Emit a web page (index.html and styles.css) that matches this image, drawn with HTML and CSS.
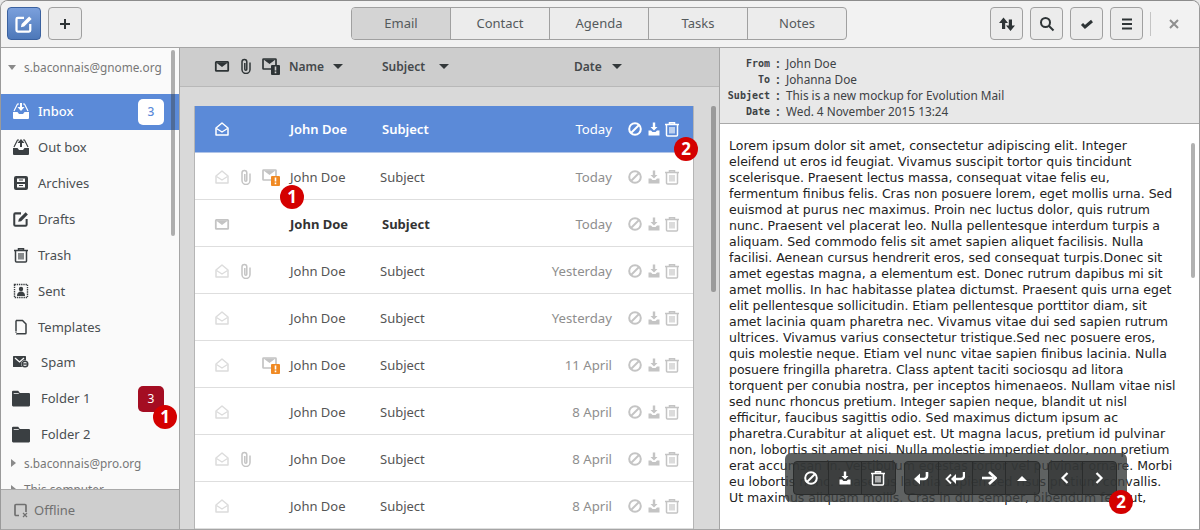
FILE: index.html
```html
<!DOCTYPE html>
<html lang="en">
<head>
  <meta charset="UTF-8" />
  <title>Evolution Mail</title>
  <link rel="stylesheet" href="styles.css">
</head>
<body>

  <!-- icons -->
  <svg class="defs" width="0" height="0">
    <symbol id="i-edit" viewBox="0 0 16 16"><path d="M8 3H3a1 1 0 0 0-1 1v9a1 1 0 0 0 1 1h9a1 1 0 0 0 1-1V8" fill="none" stroke="currentColor" stroke-width="1.8"/><path d="M5.5 10.500l.6-2.600 6-6 2 2-6 6z" fill="currentColor"/></symbol>
    <symbol id="i-plus" viewBox="0 0 16 16"><path d="M8 3v10M3 8h10" stroke="currentColor" stroke-width="2"/></symbol>
    <symbol id="i-mail" viewBox="0 0 16 16"><rect x="1.8" y="3.8" width="12.4" height="9" rx=".6" fill="none" stroke="currentColor" stroke-width="1.8"/><path d="M2 4.500h12L8 9z" fill="currentColor"/></symbol>
    <symbol id="i-open" viewBox="0 0 16 16"><path d="M2 7L8 2l6 5v7H2z" fill="none" stroke="currentColor" stroke-width="1.5" stroke-linejoin="round"/><path d="M2.500 7.500L8 11l5.500-3.500" fill="none" stroke="currentColor" stroke-width="1.3"/></symbol>
    <symbol id="i-clip" viewBox="0 0 16 16"><path d="M12 4.500v7a4 4 0 0 1-8 0V3.800a2.400 2.400 0 0 1 4.800 0v7.400a1 1 0 0 1-2 0V5" fill="none" stroke="currentColor" stroke-width="1.5"/></symbol>
    <symbol id="i-warn" viewBox="0 0 18 18"><rect x="1" y="2" width="13" height="10" rx=".6" fill="none" stroke="currentColor" stroke-width="1.7"/><path d="M1.500 2.500h12L7.500 7z" fill="currentColor"/><rect x="9" y="8" width="9" height="10" rx="1" fill="#f08a24"/><path d="M12.700 9.500h1.600v4h-1.600zM12.700 14.500h1.600v1.800h-1.600z" fill="#fff"/></symbol>
    <symbol id="i-warn-dark" viewBox="0 0 18 18"><rect x="1" y="2" width="13" height="10" rx=".6" fill="none" stroke="currentColor" stroke-width="1.7"/><path d="M1.500 2.500h12L7.500 7z" fill="currentColor"/><rect x="9" y="8" width="9" height="10" rx="1" fill="currentColor"/><path d="M12.700 9.500h1.600v4h-1.600zM12.700 14.500h1.600v1.800h-1.600z" fill="#ccc"/></symbol>
    <symbol id="i-block" viewBox="0 0 16 16"><circle cx="8" cy="8" r="5.8" fill="none" stroke="currentColor" stroke-width="2"/><path d="M4 12l8-8" stroke="currentColor" stroke-width="2"/></symbol>
    <symbol id="i-junk" viewBox="0 0 16 16"><path d="M6.800 1.500h2.400v4.500H11.500L8 9.500 4.500 6h2.300z" fill="currentColor"/><path d="M2.500 9.500H5L6.500 11h3L11 9.500h2.500v5h-11z" fill="currentColor"/></symbol>
    <symbol id="i-trash" viewBox="0 0 16 16"><path d="M1 3.500h14M5.500 3V1.700h5V3" fill="none" stroke="currentColor" stroke-width="1.500"/><path d="M2.500 4v10a1 1 0 0 0 1 1h9a1 1 0 0 0 1-1V4" fill="none" stroke="currentColor" stroke-width="1.500"/><path d="M6 6v6.500M8 6v6.500M10 6v6.500" stroke="currentColor" stroke-width="1.200"/></symbol>
    <symbol id="i-inbox" viewBox="0 0 18 18"><path d="M2 9L5.500 2H7M11 2h1.500L16 9" fill="none" stroke="currentColor" stroke-width="1.200"/><path d="M8 1h2v4h2.500L9 9 5.500 5H8z" fill="currentColor"/><path d="M1 10h4.500l1.500 2h4l1.500-2H17v6a1 1 0 0 1-1 1H2a1 1 0 0 1-1-1z" fill="currentColor"/></symbol>
    <symbol id="i-outbox" viewBox="0 0 18 18"><path d="M2 9L5.500 2H7M11 2h1.500L16 9" fill="none" stroke="currentColor" stroke-width="1.200"/><path d="M9 1l3.500 4H10v4H8V5H5.500z" fill="currentColor"/><path d="M1 10h4.500l1.500 2h4l1.500-2H17v6a1 1 0 0 1-1 1H2a1 1 0 0 1-1-1z" fill="currentColor"/></symbol>
    <symbol id="i-archive" viewBox="0 0 16 16"><rect x="1" y="1" width="14" height="14" rx="2" fill="currentColor"/><path d="M4 3.500h8v3.500H4zM4 9h8v3.500H4z" fill="#fafafa"/><path d="M6 5h4M6 10.500h4" stroke="currentColor" stroke-width="1"/></symbol>
    <symbol id="i-sent" viewBox="0 0 16 16"><rect x="1.500" y="1.500" width="13" height="13" fill="none" stroke="currentColor" stroke-width="1.400" stroke-dasharray="1.400 .8"/><circle cx="8" cy="6" r="2.200" fill="currentColor"/><path d="M4 13c0-3 1.500-4.500 4-4.500S12 10 12 13z" fill="currentColor"/></symbol>
    <symbol id="i-doc" viewBox="0 0 16 16"><path d="M3 1.500h6.500L13 5v9a.8.8 0 0 1-.8.8H3.800" fill="none" stroke="currentColor" stroke-width="1.500"/><path d="M3 1.500v11" stroke="currentColor" stroke-width="1.500"/><path d="M3 13v2h1" stroke="currentColor" stroke-width="1" stroke-dasharray="1 1" fill="none"/></symbol>
    <symbol id="i-spam" viewBox="0 0 18 14"><rect x="1" y="1" width="13" height="11" rx=".6" fill="currentColor"/><path d="M3 3l4.500 4L12 3" fill="none" stroke="#fafafa" stroke-width="1.300"/><circle cx="13" cy="9" r="3.800" fill="#fafafa"/><circle cx="13" cy="9" r="2.800" fill="none" stroke="currentColor" stroke-width="1.400"/><path d="M10.500 9h5" stroke="currentColor" stroke-width="1.400"/></symbol>
    <symbol id="i-folder" viewBox="0 0 16 15"><path d="M0 2a1 1 0 0 1 1-1h4.500l1.500 2h8a1 1 0 0 1 1 1v10a1 1 0 0 1-1 1H1a1 1 0 0 1-1-1z" fill="currentColor"/><path d="M1.500 3.500h4.500" stroke="#fafafa" stroke-width=".7"/></symbol>
    <symbol id="i-offline" viewBox="0 0 16 16"><path d="M6 13.500H3a1 1 0 0 1-1-1v-9a1 1 0 0 1 1-1h9a1 1 0 0 1 1 1V10" fill="none" stroke="currentColor" stroke-width="1.700"/><path d="M10 11l4 4M14 11l-4 4" stroke="currentColor" stroke-width="1.200"/></symbol>
    <symbol id="i-sort" viewBox="0 0 16 16"><path d="M4.500 1.500L9 7H6.200v6H3V7H0zM11.500 15L16 9.500h-3v-6H9.800v6H7z" fill="currentColor"/></symbol>
    <symbol id="i-search" viewBox="0 0 16 16"><circle cx="6.500" cy="6.500" r="4.500" fill="none" stroke="currentColor" stroke-width="2"/><path d="M10 10l4.500 4.500" stroke="currentColor" stroke-width="2"/></symbol>
    <symbol id="i-check" viewBox="0 0 16 16"><path d="M3 8l3 3 7-6" fill="none" stroke="currentColor" stroke-width="3"/></symbol>
    <symbol id="i-menu" viewBox="0 0 16 16"><path d="M3 3.500h10M3 8h10M3 12.500h10" stroke="currentColor" stroke-width="2"/></symbol>
    <symbol id="i-close" viewBox="0 0 16 16"><path d="M4 4l8 8M12 4l-8 8" stroke="currentColor" stroke-width="2"/></symbol>
    <symbol id="i-reply" viewBox="0 0 16 16"><path d="M14 2v4a3 3 0 0 1-3 3H6" fill="none" stroke="currentColor" stroke-width="2.600"/><path d="M7 3.500v11L1 9z" fill="currentColor"/></symbol>
    <symbol id="i-replyall" viewBox="0 0 20 16"><path d="M19 2v4a3 3 0 0 1-3 3h-5" fill="none" stroke="currentColor" stroke-width="2.400"/><path d="M11 4v10L6 9z" fill="currentColor"/><path d="M6 4.500L1.500 9 6 13.500" fill="none" stroke="currentColor" stroke-width="1.800"/></symbol>
    <symbol id="i-forward" viewBox="0 0 16 16"><path d="M1 8h11" stroke="currentColor" stroke-width="2.600"/><path d="M8 2l6.500 6L8 14" fill="none" stroke="currentColor" stroke-width="2.600"/></symbol>
    <symbol id="i-up" viewBox="0 0 16 16"><path d="M3 11l5-5 5 5z" fill="currentColor"/></symbol>
    <symbol id="i-prev" viewBox="0 0 16 16"><path d="M10.500 3l-5 5 5 5" fill="none" stroke="currentColor" stroke-width="2.200"/></symbol>
    <symbol id="i-next" viewBox="0 0 16 16"><path d="M5.500 3l5 5-5 5" fill="none" stroke="currentColor" stroke-width="2.200"/></symbol>
  </svg>

  <div class="window">

    <header class="toolbar">
      <div class="tool-left">
        <button class="btn btn-blue"><svg class="ic20"><use href="#i-edit"/></svg></button>
        <button class="btn"><svg class="ic16"><use href="#i-plus"/></svg></button>
      </div>
      <nav class="tabs">
        <div class="tab active">Email</div>
        <div class="tab">Contact</div>
        <div class="tab">Agenda</div>
        <div class="tab">Tasks</div>
        <div class="tab">Notes</div>
      </nav>
      <div class="tool-right">
        <button class="btn"><svg class="ic16"><use href="#i-sort"/></svg></button>
        <button class="btn"><svg class="ic16"><use href="#i-search"/></svg></button>
        <button class="btn"><svg class="ic16"><use href="#i-check"/></svg></button>
        <button class="btn"><svg class="ic16"><use href="#i-menu"/></svg></button>
        <span class="tool-sep"></span>
        <svg class="ic16 close"><use href="#i-close"/></svg>
      </div>
    </header>

    <div class="main">

      <aside class="sidebar">
        <div class="side-scroll">
          <div class="account"><span class="arrow-down"></span>s.baconnais@gnome.org</div>
          <div class="item selected"><svg class="ic18"><use href="#i-inbox"/></svg>Inbox<span class="badge">3</span></div>
          <div class="item"><svg class="ic18"><use href="#i-outbox"/></svg>Out box</div>
          <div class="item"><svg class="ic16"><use href="#i-archive"/></svg>Archives</div>
          <div class="item"><svg class="ic18"><use href="#i-edit"/></svg>Drafts</div>
          <div class="item"><svg class="ic16"><use href="#i-trash"/></svg>Trash</div>
          <div class="item"><svg class="ic16"><use href="#i-sent"/></svg>Sent</div>
          <div class="item"><svg class="ic16"><use href="#i-doc"/></svg>Templates</div>
          <div class="item item-spam item-wide"><svg class="ic16"><use href="#i-spam"/></svg>Spam</div>
          <div class="item item-wide"><svg class="ic18"><use href="#i-folder"/></svg>Folder 1<span class="badge badge-red">3</span></div>
          <div class="item item-wide"><svg class="ic18"><use href="#i-folder"/></svg>Folder 2</div>
          <div class="account account-sub"><span class="arrow-right"></span>s.baconnais@pro.org</div>
          <div class="account account-sub"><span class="arrow-right"></span>This computer</div>
        </div>
        <div class="offline"><svg class="ic16"><use href="#i-offline"/></svg>Offline</div>
        <div class="scroll scroll-side"></div>
        <div class="marker marker-side">1</div>
      </aside>

      <section class="list">
        <div class="list-head">
          <svg class="ic16 head-ic"><use href="#i-mail"/></svg>
          <svg class="ic16 head-ic"><use href="#i-clip"/></svg>
          <svg class="ic18 head-ic"><use href="#i-warn-dark"/></svg>
          <span class="col-name">Name</span><span class="arrow-sort"></span>
          <span class="col-subject">Subject</span><span class="arrow-sort"></span>
          <span class="col-date">Date</span><span class="arrow-sort"></span>
        </div>
        <div class="list-body">
          <div class="cards">
            <div class="row row-selected">
              <span class="flags"><svg class="ic16"><use href="#i-open"/></svg></span>
              <span class="name">John Doe</span><span class="subject">Subject</span><span class="date">Today</span>
              <span class="acts"><svg class="ic16"><use href="#i-block"/></svg><svg class="ic16"><use href="#i-junk"/></svg><svg class="ic16"><use href="#i-trash"/></svg></span>
            </div>
            <div class="row">
              <span class="flags"><svg class="ic16 faint"><use href="#i-open"/></svg><svg class="ic16"><use href="#i-clip"/></svg><svg class="ic18"><use href="#i-warn"/></svg></span>
              <span class="name">John Doe</span><span class="subject">Subject</span><span class="date">Today</span>
              <span class="acts"><svg class="ic16"><use href="#i-block"/></svg><svg class="ic16"><use href="#i-junk"/></svg><svg class="ic16"><use href="#i-trash"/></svg></span>
            </div>
            <div class="row row-unread">
              <span class="flags"><svg class="ic16"><use href="#i-mail"/></svg></span>
              <span class="name">John Doe</span><span class="subject">Subject</span><span class="date">Today</span>
              <span class="acts"><svg class="ic16"><use href="#i-block"/></svg><svg class="ic16"><use href="#i-junk"/></svg><svg class="ic16"><use href="#i-trash"/></svg></span>
            </div>
            <div class="row">
              <span class="flags"><svg class="ic16 faint"><use href="#i-open"/></svg><svg class="ic16"><use href="#i-clip"/></svg></span>
              <span class="name">John Doe</span><span class="subject">Subject</span><span class="date">Yesterday</span>
              <span class="acts"><svg class="ic16"><use href="#i-block"/></svg><svg class="ic16"><use href="#i-junk"/></svg><svg class="ic16"><use href="#i-trash"/></svg></span>
            </div>
            <div class="row">
              <span class="flags"><svg class="ic16 faint"><use href="#i-open"/></svg></span>
              <span class="name">John Doe</span><span class="subject">Subject</span><span class="date">Yesterday</span>
              <span class="acts"><svg class="ic16"><use href="#i-block"/></svg><svg class="ic16"><use href="#i-junk"/></svg><svg class="ic16"><use href="#i-trash"/></svg></span>
            </div>
            <div class="row">
              <span class="flags"><svg class="ic16 faint"><use href="#i-open"/></svg><span class="flag-gap"></span><svg class="ic18"><use href="#i-warn"/></svg></span>
              <span class="name">John Doe</span><span class="subject">Subject</span><span class="date">11 April</span>
              <span class="acts"><svg class="ic16"><use href="#i-block"/></svg><svg class="ic16"><use href="#i-junk"/></svg><svg class="ic16"><use href="#i-trash"/></svg></span>
            </div>
            <div class="row">
              <span class="flags"><svg class="ic16 faint"><use href="#i-open"/></svg></span>
              <span class="name">John Doe</span><span class="subject">Subject</span><span class="date">8 April</span>
              <span class="acts"><svg class="ic16"><use href="#i-block"/></svg><svg class="ic16"><use href="#i-junk"/></svg><svg class="ic16"><use href="#i-trash"/></svg></span>
            </div>
            <div class="row">
              <span class="flags"><svg class="ic16 faint"><use href="#i-open"/></svg><svg class="ic16"><use href="#i-clip"/></svg></span>
              <span class="name">John Doe</span><span class="subject">Subject</span><span class="date">8 April</span>
              <span class="acts"><svg class="ic16"><use href="#i-block"/></svg><svg class="ic16"><use href="#i-junk"/></svg><svg class="ic16"><use href="#i-trash"/></svg></span>
            </div>
            <div class="row">
              <span class="flags"><svg class="ic16 faint"><use href="#i-open"/></svg></span>
              <span class="name">John Doe</span><span class="subject">Subject</span><span class="date">8 April</span>
              <span class="acts"><svg class="ic16"><use href="#i-block"/></svg><svg class="ic16"><use href="#i-junk"/></svg><svg class="ic16"><use href="#i-trash"/></svg></span>
            </div>
          </div>
        </div>
        <div class="scroll scroll-list"></div>
        <div class="marker marker-row">1</div>
        <div class="marker marker-trash">2</div>
      </section>

      <section class="reader">
        <div class="mail-head">
          <b>From</b><i>:</i><span>John Doe</span>
          <b>To</b><i>:</i><span>Johanna Doe</span>
          <b>Subject</b><i>:</i><span>This is a new mockup for Evolution Mail</span>
          <b>Date</b><i>:</i><span>Wed. 4 November 2015 13:24</span>
        </div>
        <div class="mail-body">
          Lorem ipsum dolor sit amet, consectetur adipiscing elit. Integer<br>
          eleifend ut eros id feugiat. Vivamus suscipit tortor quis tincidunt<br>
          scelerisque. Praesent lectus massa, consequat vitae felis eu,<br>
          fermentum finibus felis. Cras non posuere lorem, eget mollis urna. Sed<br>
          euismod at purus nec maximus. Proin nec luctus dolor, quis rutrum<br>
          nunc. Praesent vel placerat leo. Nulla pellentesque interdum turpis a<br>
          aliquam. Sed commodo felis sit amet sapien aliquet facilisis. Nulla<br>
          facilisi. Aenean cursus hendrerit eros, sed consequat turpis.Donec sit<br>
          amet egestas magna, a elementum est. Donec rutrum dapibus mi sit<br>
          amet mollis. In hac habitasse platea dictumst. Praesent quis urna eget<br>
          elit pellentesque sollicitudin. Etiam pellentesque porttitor diam, sit<br>
          amet lacinia quam pharetra nec. Vivamus vitae dui sed sapien rutrum<br>
          ultrices. Vivamus varius consectetur tristique.Sed nec posuere eros,<br>
          quis molestie neque. Etiam vel nunc vitae sapien finibus lacinia. Nulla<br>
          posuere fringilla pharetra. Class aptent taciti sociosqu ad litora<br>
          torquent per conubia nostra, per inceptos himenaeos. Nullam vitae nisl<br>
          sed nunc rhoncus pretium. Integer sapien neque, blandit ut nisl<br>
          efficitur, faucibus sagittis odio. Sed maximus dictum ipsum ac<br>
          pharetra.Curabitur at aliquet est. Ut magna lacus, pretium id pulvinar<br>
          non, lobortis sit amet nisi. Nulla molestie imperdiet dolor, non pretium<br>
          erat accumsan in. Vestibulum egestas tortor vel pulvinar ornare. Morbi<br>
          eu lobortis nunc. Phasellus lacinia sapien sed risus pretium convallis.<br>
          Ut maximus aliquam mollis. Cras in dui semper, bibendum felis ut,
        </div>
        <div class="scroll scroll-reader"></div>
        <div class="float-bar">
          <div class="float-group">
            <span><svg class="ic16"><use href="#i-block"/></svg></span>
            <span><svg class="ic16"><use href="#i-junk"/></svg></span>
            <span><svg class="ic16"><use href="#i-trash"/></svg></span>
          </div>
          <div class="float-group">
            <span><svg class="ic16"><use href="#i-reply"/></svg></span>
            <span><svg class="ic20"><use href="#i-replyall"/></svg></span>
            <span><svg class="ic16"><use href="#i-forward"/></svg></span>
            <span><svg class="ic16"><use href="#i-up"/></svg></span>
          </div>
          <div class="float-group">
            <span><svg class="ic16"><use href="#i-prev"/></svg></span>
            <span><svg class="ic16"><use href="#i-next"/></svg></span>
          </div>
        </div>
        <div class="marker marker-bar">2</div>
      </section>

    </div>
  </div>

</body>
</html>
```

FILE: styles.css
```css
html, body {
  margin: 0;
  padding: 0;
  background-color: #e8e8e8;
}

body {
  width: 1200px;
  height: 530px;
  overflow: hidden;
  font-family: "Noto Sans", sans-serif;
  font-size: 13px;
  color: #3d4245;
}

.defs {
  position: absolute;
}

svg {
  display: block;
  flex: none;
}

.ic16 { width: 16px; height: 16px; }
.ic18 { width: 18px; height: 18px; }
.ic20 { width: 20px; height: 20px; }

.window {
  display: flex;
  flex-direction: column;
  height: 530px;
  box-sizing: border-box;
  overflow: hidden;
  background-color: #fff;
  border: 1px solid #9a9a9a;
  border-top-color: #8c8c8c;
  border-bottom-color: #a5a5a5;
  border-radius: 8px 8px 0 0;
}

/* top bar */
.toolbar {
  display: flex;
  align-items: center;
  justify-content: space-between;
  flex: none;
  height: 47px;
  padding: 0 0 1px 6px;
  box-sizing: border-box;
  background-color: #f2f2f2;
  border-bottom: 1px solid #a5a5a5;
}

.tool-left,
.tool-right {
  display: flex;
  align-items: center;
  gap: 7px;
}

.tool-left {
  width: 344px;
}

.tool-right {
  width: 352px;
  padding-left: 143px;
  box-sizing: border-box;
}

.btn {
  display: flex;
  align-items: center;
  justify-content: center;
  width: 34px;
  height: 33px;
  padding: 0;
  color: #2e3436;
  background-color: #ececec;
  border: 1px solid #a0a0a0;
  border-radius: 4px;
}

.tool-right .btn {
  width: 33px;
}

.btn-blue {
  color: #fff;
  background: linear-gradient(#7ba0dc, #4d78b9);
  border-color: #3a619f;
}

.tool-sep {
  width: 1px;
  height: 24px;
  background-color: #c4c4c4;
}

.close {
  margin-left: 8px;
  color: #8f8f8f;
}

.tabs {
  display: flex;
  width: 496px;
  height: 33px;
  box-sizing: border-box;
  background-color: #ececec;
  border: 1px solid #a0a0a0;
  border-radius: 4px;
  overflow: hidden;
}

.tab {
  flex: 1;
  line-height: 31px;
  text-align: center;
  color: #555a5c;
  border-left: 1px solid #a0a0a0;
}

.tab:first-child {
  border-left: none;
}

.tab.active {
  background-color: #d4d4d4;
}

.main {
  display: flex;
  flex: 1;
  min-height: 0;
}

/* left column */
.sidebar {
  position: relative;
  display: flex;
  flex-direction: column;
  flex: none;
  width: 178px;
  background-color: #fafafa;
  border-right: 1px solid #a5a5a5;
}

.side-scroll {
  flex: 1;
  min-height: 0;
  overflow: hidden;
}

.account {
  display: flex;
  align-items: center;
  gap: 8px;
  height: 38px;
  margin-bottom: 8px;
  padding-left: 7px;
  font-size: 11.8px;
  color: #777;
}

.account-sub {
  height: 26px;
  margin: 0;
  padding-left: 10px;
}

.item + .account-sub {
  margin-top: -3px;
}

.arrow-down {
  width: 0;
  height: 0;
  border: 4px solid transparent;
  border-top: 5px solid #8a8a8a;
  border-bottom: none;
}

.arrow-right {
  width: 0;
  height: 0;
  border: 4px solid transparent;
  border-left: 5px solid #8a8a8a;
  border-right: none;
}

.item {
  position: relative;
  display: flex;
  align-items: center;
  height: 36px;
  padding: 0 0 2px 11px;
  box-sizing: border-box;
  color: #4a4f52;
}

.item svg {
  width: 18px;
  margin-right: 8px;
  color: #3a3f42;
}

.item-wide svg {
  margin-right: 11px;
}

.item-spam {
  height: 35px;
  padding-bottom: 4px;
}

.item.selected {
  color: #fff;
  font-weight: 500;
  background-color: #5b8ad8;
}

.selected svg {
  color: #fff;
}

.badge {
  position: absolute;
  top: 5px;
  left: 137px;
  width: 26px;
  height: 26px;
  line-height: 26px;
  font-size: 12px;
  text-align: center;
  color: #5b8ad8;
  background-color: #fff;
  border-radius: 5px;
}

.badge-red {
  color: #fff;
  background-color: #a40d22;
}

.offline {
  display: flex;
  flex: none;
  align-items: center;
  gap: 5px;
  height: 40px;
  padding-left: 12px;
  box-sizing: border-box;
  color: #707070;
  background-color: #cecece;
  border-top: 1px solid #a9a9a9;
}

.scroll {
  position: absolute;
  width: 4px;
  background-color: rgba(60, 60, 60, 0.4);
  border-radius: 2px;
}

.scroll-side { left: 170px; top: 2px; height: 186px; }
.scroll-list { left: 531px; top: 58px; height: 186px; width: 5px; }
.scroll-reader { left: 471px; top: 95px; height: 135px; }

.marker {
  position: absolute;
  width: 24px;
  height: 24px;
  line-height: 24px;
  text-align: center;
  font-family: "Open Sans", sans-serif;
  font-size: 17px;
  font-weight: 700;
  color: #fff;
  background-color: #d40000;
  border-radius: 50%;
  z-index: 2;
}

.marker-side { left: 152px; top: 357px; }
.marker-row { left: 100px; top: 137px; }
.marker-trash { left: 494px; top: 89px; }
.marker-bar { left: 389px; top: 442px; }

/* message list */
.list {
  position: relative;
  display: flex;
  flex-direction: column;
  flex: none;
  width: 540px;
  box-sizing: border-box;
  background-color: #d9d9d9;
  border-right: 1px solid #a5a5a5;
}

.list-head {
  display: flex;
  align-items: center;
  flex: none;
  height: 39px;
  padding: 0 0 2px 34px;
  box-sizing: border-box;
  background-color: #cdcdcd;
  border-bottom: 1px solid #b8b8b8;
  font-size: 12px;
  font-weight: 600;
  color: #44484b;
}

.head-ic {
  margin-right: 8px;
  color: #2e3436;
}

.col-name { margin-left: 1px; width: 44px; }
.col-subject { margin-left: 39px; width: 57px; }
.col-date { margin-left: 125px; width: 38px; }

.arrow-sort {
  width: 0;
  height: 0;
  border: 5px solid transparent;
  border-top: 5px solid #33383a;
  border-bottom: none;
}

.list-body {
  flex: 1;
  min-height: 0;
  padding: 19px 0 0 14px;
  overflow: hidden;
}

.cards {
  width: 500px;
  box-sizing: border-box;
  background-color: #fff;
  border: 1px solid #b5b5b5;
  border-width: 0 1px;
}

.row {
  display: flex;
  align-items: center;
  height: 47px;
  padding: 2px 13px 0 0;
  box-sizing: border-box;
  border-bottom: 1px solid #dedede;
  color: #555;
  font-size: 13px;
}

.flags {
  display: flex;
  align-items: center;
  gap: 8px;
  width: 95px;
  padding-left: 19px;
  box-sizing: border-box;
  color: #c4c4c4;
}

.flags .faint {
  color: #dcdcdc;
}

.flag-gap {
  width: 16px;
}

.name { width: 90px; }
.subject { width: 100px; }

.date {
  flex: 1;
  font-size: 13.2px;
  text-align: right;
  color: #8e8e8e;
}

.acts {
  display: flex;
  gap: 2.5px;
  margin-left: 15px;
  color: #c4c4c4;
}

.row-selected {
  padding-top: 0;
  color: #fff;
  font-weight: 600;
  background-color: #5b8ad8;
  border-bottom-color: #b0c4e8;
}

.row-selected .flags,
.row-selected .date,
.row-selected .acts {
  color: #fff;
}

.row-selected .date,
.row-unread .date {
  font-weight: 400;
}

.row-selected .subject,
.row-unread .subject {
  padding-left: 2px;
}

.row-unread {
  color: #333;
  font-weight: 700;
}

/* reading pane */
.reader {
  position: relative;
  flex: 1;
  min-width: 0;
  background-color: #fff;
}

.mail-head {
  display: grid;
  grid-template-columns: 50px 16px 1fr;
  grid-auto-rows: 16px;
  height: 76px;
  padding-top: 7px;
  box-sizing: border-box;
  line-height: 16px;
  font-size: 11.8px;
  color: #3d4245;
  background-color: #e8e8e8;
  border-bottom: 1px solid #a9a9a9;
}

.mail-head b {
  padding-top: 1px;
  font-family: "DejaVu Sans Mono", monospace;
  font-size: 10px;
  text-align: right;
}

.mail-head i {
  font-style: normal;
  font-weight: 700;
  text-align: center;
}

.mail-body {
  padding: 14px 0 0 9px;
  font-family: "DejaVu Sans", sans-serif;
  font-size: 12.5px;
  line-height: 16px;
  color: #222;
  white-space: nowrap;
}

.float-bar {
  position: absolute;
  left: 65px;
  top: 405px;
  display: flex;
  gap: 8px;
  width: 342px;
  height: 49px;
  padding: 8px;
  box-sizing: border-box;
  background-color: rgba(60, 63, 63, 0.82);
  border-radius: 6px;
}

.float-group {
  display: flex;
  height: 32px;
  background-color: rgba(50, 52, 52, 0.75);
  border: 1px solid #2a2c2c;
  border-radius: 4px;
  color: #fff;
}

.float-group span {
  display: flex;
  align-items: center;
  justify-content: center;
  width: 33.5px;
  box-sizing: border-box;
  border-left: 1px solid #2a2c2c;
}

.float-group span:first-child {
  border-left: none;
}
```
